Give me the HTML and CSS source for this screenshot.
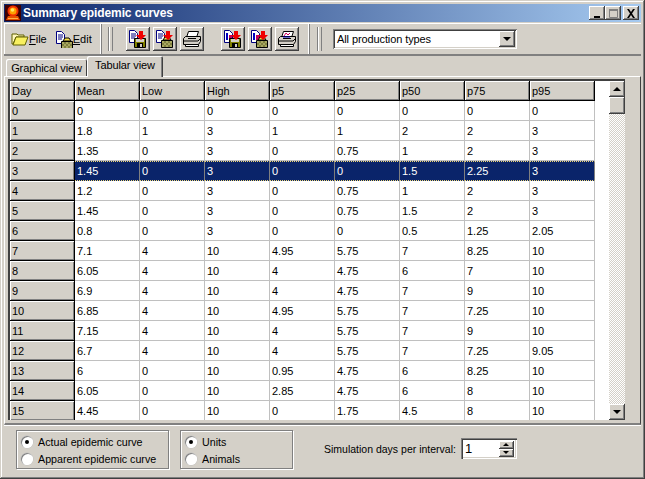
FILE: index.html
```html
<!DOCTYPE html>
<html>
<head>
    <title>Summary epidemic curves</title>
    <link rel="stylesheet" href="styles.css">
</head>
<body>
<svg class="defs" width="0" height="0">
    <defs>
        <g id="doc">
            <path d="M1.500 1.500h5l3 3v9h-8z" fill="#fff" stroke="#000080"/>
            <path d="M3 5h5M3 7h5M3 9h4" stroke="#000080"/>
        </g>
        <g id="doc-color">
            <path d="M1.500 1.500h5l3 3v9h-8z" fill="#fff" stroke="#000080"/>
            <path d="M3 4h2v7H3z" fill="#0000c0"/>
            <path d="M6 6h3v5H6z" fill="#c00060"/>
        </g>
        <g id="arrow">
            <path d="M11 2h4v4h3l-5 5-5-5h3z" fill="#f00000"/>
        </g>
        <g id="floppy">
            <path d="M6.500 9.500h11v9h-11z" fill="#808000" stroke="#000"/>
            <path d="M8 10h8v3H8z" fill="#d4d0c8"/>
            <path d="M9 14h6v5H9z" fill="#000"/>
            <path d="M12 15h2v3h-2z" fill="#d4d0c8"/>
        </g>
        <g id="bag">
            <path d="M6.500 11.500h11v7h-11z" fill="#808040" stroke="#000"/>
            <path d="M7 12h2v2H7zm4 0h2v2h-2zm4 0h2v2h-2zM9 14h2v2H9zm4 0h2v2h-2zm-6 2h2v2H7zm4 0h2v2h-2zm4 0h2v2h-2z" fill="#a8a860"/>
            <path d="M8 11l2-3h4l2 3z" fill="#f8e048" stroke="#000"/>
        </g>
        <g id="printer">
            <path d="M6.500 2.500h10l-2 6h-10z" fill="#fff" stroke="#000"/>
            <path d="M1.500 9.500l2-2h15v5l-2 3h-15z" fill="#d4d0c8" stroke="#000"/>
            <path d="M2 12h14l2-2" fill="none" stroke="#000"/>
            <path d="M3.500 15.500h13v2h-13z" fill="#fff" stroke="#000"/>
            <path d="M6 9.500h8" stroke="#000"/>
        </g>
        <g id="printer-color">
            <use href="#printer"/>
            <path d="M7 7l2-3 2 2 2-2" fill="none" stroke="#d00060"/>
            <path d="M6 8h7" stroke="#0000c0"/>
        </g>
    </defs>
</svg>

<div class="window">
    <div class="titlebar">
        <svg class="app-icon" width="16" height="16" viewBox="0 0 16 16">
            <rect width="16" height="16" fill="#400000"/>
            <circle cx="8" cy="6" r="5.500" fill="#f03000"/>
            <circle cx="8" cy="6" r="3.500" fill="#ffa000"/>
            <circle cx="7.500" cy="5" r="1.800" fill="#ffe860"/>
            <path d="M1 15l2-4h10l2 4z" fill="#e85000"/>
            <path d="M3 13h10v1H3z" fill="#ffb040"/>
        </svg>
        <span class="title-text">Summary epidemic curves</span>
        <div class="caption-btns">
            <button class="caption-btn"><svg width="9" height="9" viewBox="0 0 9 9"><path d="M1 7h6v2H1z"/></svg></button>
            <button class="caption-btn"><svg width="11" height="10" viewBox="0 0 11 10"><path d="M1.500 1.500h8v8h-8z" fill="none" stroke="#808080"/><path d="M1 1h9v2H1z" fill="#808080"/></svg></button>
            <button class="caption-btn caption-close"><svg width="10" height="9" viewBox="0 0 10 9"><path d="M1 0h2l2 3 2-3h2L6 4.500 9 9H7L5 6 3 9H1l3-4.500z"/></svg></button>
        </div>
    </div>

    <div class="toolbar">
        <div class="band band-menu">
            <span class="menu-item">
                <svg width="18" height="16" viewBox="0 0 18 16"><path d="M1 3h5l1 1h6v2H5L2 13H1z" fill="#fff8c0" stroke="#606000"/><path d="M5 6h12l-3 8H2z" fill="#f8f060" stroke="#606000"/></svg>
                <span><u>F</u>ile</span>
            </span>
            <span class="menu-item menu-edit">
                <svg width="18" height="18" viewBox="0 0 18 18"><use href="#doc"/><use href="#bag"/></svg>
                <span><u>E</u>dit</span>
            </span>
        </div>
        <div class="band band-tools">
            <i class="grip"></i>
            <div class="tool-group">
                <button class="tool"><svg width="20" height="20" viewBox="0 0 20 20"><use href="#doc"/><use href="#floppy"/><use href="#arrow"/></svg></button>
                <button class="tool"><svg width="20" height="20" viewBox="0 0 20 20"><use href="#doc"/><use href="#bag"/><use href="#arrow"/></svg></button>
                <button class="tool"><svg width="20" height="20" viewBox="0 0 20 20"><use href="#printer"/></svg></button>
            </div>
            <div class="tool-group tool-group-b">
                <button class="tool"><svg width="20" height="20" viewBox="0 0 20 20"><use href="#doc-color"/><use href="#floppy"/><use href="#arrow"/></svg></button>
                <button class="tool"><svg width="20" height="20" viewBox="0 0 20 20"><use href="#doc-color"/><use href="#bag"/><use href="#arrow"/></svg></button>
                <button class="tool"><svg width="20" height="20" viewBox="0 0 20 20"><use href="#printer-color"/></svg></button>
            </div>
        </div>
        <div class="band band-combo">
            <i class="grip"></i>
            <div class="combo">
                <span class="combo-text">All production types</span>
                <button class="scroll-btn combo-btn"><i class="arrow-down"></i></button>
            </div>
        </div>
    </div>

    <div class="tabs">
        <span class="tab">Graphical view</span>
        <span class="tab tab-active">Tabular view</span>
    </div>

    <div class="tab-panel">
        <div class="grid-frame">
            <table class="grid">
                <thead>
                    <tr><th>Day</th><th>Mean</th><th>Low</th><th>High</th><th>p5</th><th>p25</th><th>p50</th><th>p75</th><th>p95</th></tr>
                </thead>
                <tbody>
                    <tr><th>0</th><td>0</td><td>0</td><td>0</td><td>0</td><td>0</td><td>0</td><td>0</td><td>0</td></tr>
                    <tr><th>1</th><td>1.8</td><td>1</td><td>3</td><td>1</td><td>1</td><td>2</td><td>2</td><td>3</td></tr>
                    <tr><th>2</th><td>1.35</td><td>0</td><td>3</td><td>0</td><td>0.75</td><td>1</td><td>2</td><td>3</td></tr>
                    <tr class="selected"><th>3</th><td>1.45</td><td>0</td><td>3</td><td>0</td><td>0</td><td>1.5</td><td>2.25</td><td>3</td></tr>
                    <tr><th>4</th><td>1.2</td><td>0</td><td>3</td><td>0</td><td>0.75</td><td>1</td><td>2</td><td>3</td></tr>
                    <tr><th>5</th><td>1.45</td><td>0</td><td>3</td><td>0</td><td>0.75</td><td>1.5</td><td>2</td><td>3</td></tr>
                    <tr><th>6</th><td>0.8</td><td>0</td><td>3</td><td>0</td><td>0</td><td>0.5</td><td>1.25</td><td>2.05</td></tr>
                    <tr><th>7</th><td>7.1</td><td>4</td><td>10</td><td>4.95</td><td>5.75</td><td>7</td><td>8.25</td><td>10</td></tr>
                    <tr><th>8</th><td>6.05</td><td>4</td><td>10</td><td>4</td><td>4.75</td><td>6</td><td>7</td><td>10</td></tr>
                    <tr><th>9</th><td>6.9</td><td>4</td><td>10</td><td>4</td><td>4.75</td><td>7</td><td>9</td><td>10</td></tr>
                    <tr><th>10</th><td>6.85</td><td>4</td><td>10</td><td>4.95</td><td>5.75</td><td>7</td><td>7.25</td><td>10</td></tr>
                    <tr><th>11</th><td>7.15</td><td>4</td><td>10</td><td>4</td><td>5.75</td><td>7</td><td>9</td><td>10</td></tr>
                    <tr><th>12</th><td>6.7</td><td>4</td><td>10</td><td>4</td><td>5.75</td><td>7</td><td>7.25</td><td>9.05</td></tr>
                    <tr><th>13</th><td>6</td><td>0</td><td>10</td><td>0.95</td><td>4.75</td><td>6</td><td>8.25</td><td>10</td></tr>
                    <tr><th>14</th><td>6.05</td><td>0</td><td>10</td><td>2.85</td><td>4.75</td><td>6</td><td>8</td><td>10</td></tr>
                    <tr><th>15</th><td>4.45</td><td>0</td><td>10</td><td>0</td><td>1.75</td><td>4.5</td><td>8</td><td>10</td></tr>
                </tbody>
            </table>
            <div class="scrollbar">
                <button class="scroll-btn"><i class="arrow-up"></i></button>
                <button class="scroll-btn scroll-thumb"></button>
                <div class="scroll-track"></div>
                <button class="scroll-btn"><i class="arrow-down"></i></button>
            </div>
        </div>
    </div>

    <div class="options">
        <div class="radio-group radio-curve">
            <label class="radio"><i class="radio-dot on"></i>Actual epidemic curve</label>
            <label class="radio"><i class="radio-dot"></i>Apparent epidemic curve</label>
        </div>
        <div class="radio-group radio-units">
            <label class="radio"><i class="radio-dot on"></i>Units</label>
            <label class="radio"><i class="radio-dot"></i>Animals</label>
        </div>
        <div class="interval">
            <span>Simulation days per interval:</span>
            <div class="spin">
                <span class="spin-value">1</span>
                <div class="spin-btns">
                    <button class="scroll-btn"><i class="arrow-up small"></i></button>
                    <button class="scroll-btn"><i class="arrow-down small"></i></button>
                </div>
            </div>
        </div>
    </div>
</div>
</body>
</html>
```

FILE: styles.css
```css
* {
    box-sizing: border-box;
}

html, body {
    margin: 0;
    padding: 0;
}

body {
    width: 645px;
    height: 479px;
    overflow: hidden;
    font-family: "Liberation Sans", Arial, sans-serif;
    font-size: 11px;
    color: #000;
    background-color: #d4d0c8;
}

button {
    padding: 0;
    margin: 0;
    border: none;
    font: inherit;
}

.defs {
    position: absolute;
}

.window {
    width: 645px;
    height: 479px;
    padding: 4px;
    display: flex;
    flex-direction: column;
    background-color: #d4d0c8;
    box-shadow: inset -1px -1px 0 #404040, inset 1px 1px 0 #d4d0c8, inset -2px -2px 0 #808080, inset 2px 2px 0 #fff;
}

/* title bar */
.titlebar {
    height: 18px;
    flex: none;
    display: flex;
    align-items: center;
    padding: 0 2px 0 1px;
    background: linear-gradient(to right, #0a246a, #a6caf0);
}

.app-icon {
    flex: none;
    margin-right: 2px;
}

.title-text {
    color: #fff;
    font-size: 12px;
    font-weight: bold;
    letter-spacing: -0.1px;
}

.caption-btns {
    margin-left: auto;
    display: flex;
}

.caption-btn {
    width: 16px;
    height: 14px;
    display: flex;
    align-items: center;
    justify-content: center;
    background-color: #d4d0c8;
    box-shadow: inset -1px -1px 0 #404040, inset 1px 1px 0 #fff, inset -2px -2px 0 #808080;
}

.caption-close {
    margin-left: 2px;
}

/* tool bar */
.toolbar {
    height: 33px;
    flex: none;
    margin-top: 1px;
    display: flex;
    border-top: 1px solid #fff;
    border-bottom: 2px solid #808080;
}

.band {
    height: 100%;
    display: flex;
    align-items: center;
}

.band-menu {
    width: 97px;
    padding-left: 6px;
    gap: 8px;
    border-left: 1px solid #fff;
    border-right: 1px solid #fff;
    box-shadow: 1px 0 0 #808080;
}

.band-tools {
    width: 208px;
    padding-left: 7px;
    border-right: 1px solid #fff;
    box-shadow: 1px 0 0 #808080;
}

.band-combo {
    flex: 1;
    padding-left: 8px;
}

.grip {
    width: 5px;
    height: 24px;
    flex: none;
    border-left: 1px solid #808080;
    border-right: 1px solid #808080;
    box-shadow: inset 1px 0 0 #fff;
    background-color: #d4d0c8;
}

.menu-item {
    display: flex;
    align-items: center;
}

.tool-group {
    display: flex;
    gap: 3px;
    margin-left: 13px;
}

.tool-group-b {
    margin-left: 17px;
}

.tool {
    width: 24px;
    height: 24px;
    display: flex;
    align-items: center;
    justify-content: center;
    background-color: #d4d0c8;
    box-shadow: inset -1px -1px 0 #404040, inset 1px 1px 0 #fff, inset -2px -2px 0 #808080;
}

.combo {
    width: 184px;
    height: 20px;
    margin-left: 11px;
    display: flex;
    align-items: center;
    justify-content: space-between;
    padding: 2px;
    background-color: #fff;
    box-shadow: inset 1px 1px 0 #808080, inset -1px -1px 0 #fff, inset 2px 2px 0 #404040, inset -2px -2px 0 #d4d0c8;
}

.combo-text {
    padding-left: 2px;
    letter-spacing: -0.1px;
}

.combo-btn {
    width: 16px;
    height: 16px;
}

/* tabs */
.tabs {
    height: 20px;
    flex: none;
    display: flex;
    align-items: flex-end;
    padding-left: 2px;
}

.tab {
    height: 17px;
    width: 81px;
    display: flex;
    align-items: center;
    justify-content: center;
    letter-spacing: -0.1px;
    border-radius: 2px 2px 0 0;
    box-shadow: inset 1px 1px 0 #fff, inset -1px 0 0 #404040;
}

.tab-active {
    height: 21px;
    width: 76px;
    box-shadow: inset 1px 1px 0 #fff, inset -1px 0 0 #404040, inset -2px 0 0 #808080;
    position: relative;
    top: 1px;
    padding-bottom: 3px;
    background-color: #d4d0c8;
}

/* table panel */
.tab-panel {
    height: 349px;
    flex: none;
    padding: 2px 15px 3px 3px;
    border-top: 1px solid #fff;
    border-left: 1px solid #fff;
    border-right: 1px solid #404040;
    border-bottom: 2px solid #808080;
}

.grid-frame {
    height: 100%;
    display: flex;
    justify-content: space-between;
    overflow: hidden;
    background-color: #fff;
    padding: 2px 0 0 2px;
    box-shadow: inset 2px 2px 0 #404040, inset 1px 1px 0 #808080;
}

.grid {
    flex: none;
    border-collapse: separate;
    border-spacing: 0;
    table-layout: fixed;
    width: 585px;
    height: 340px;
}

.grid th, .grid td {
    width: 65px;
    height: 20px;
    padding: 0 0 0 2px;
    overflow: hidden;
    text-align: left;
    font-weight: normal;
    white-space: nowrap;
}

.grid td {
    border-right: 1px solid #c0c0c0;
    border-bottom: 1px solid #c0c0c0;
}

.grid th {
    background-color: #d4d0c8;
    border-right: 1px solid #000;
    border-bottom: 1px solid #000;
    box-shadow: inset 1px 1px 0 #fff, inset -1px -1px 0 #808080;
}

.selected td {
    color: #fff;
    background-color: #0a246a;
    border-right-color: #808080;
    border-top: 1px dotted #f0d878;
    border-bottom: 1px dotted #f0d878;
}

/* scroll bar */
.scrollbar {
    width: 16px;
    display: flex;
    flex-direction: column;
    flex: none;
    background-color: #d4d0c8;
}

.scroll-btn {
    width: 16px;
    height: 16px;
    flex: none;
    display: flex;
    align-items: center;
    justify-content: center;
    background-color: #d4d0c8;
    box-shadow: inset -1px -1px 0 #404040, inset 1px 1px 0 #fff, inset -2px -2px 0 #808080;
}

.scroll-thumb {
    height: 17px;
}

.scroll-track {
    flex: 1;
    background-image: conic-gradient(#fff 25%, #d4d0c8 0 50%, #fff 0 75%, #d4d0c8 0);
    background-size: 2px 2px;
}

.arrow-up, .arrow-down {
    width: 0;
    height: 0;
    border-left: 4px solid transparent;
    border-right: 4px solid transparent;
}

.arrow-up {
    border-bottom: 4px solid #000;
}

.arrow-down {
    border-top: 4px solid #000;
}

.small {
    border-left-width: 3px;
    border-right-width: 3px;
    border-top-width: 3px;
    border-bottom-width: 3px;
}

.arrow-up.small {
    border-top-width: 0;
}

.arrow-down.small {
    border-bottom-width: 0;
}

/* bottom options */
.options {
    flex: 1;
    display: flex;
    align-items: flex-start;
    padding: 4px 0 0 12px;
    border-top: 1px solid #fff;
    font-size: 10.500px;
}

.radio-group {
    height: 39px;
    padding: 2px 0 0 4px;
    display: flex;
    flex-direction: column;
    font-size: 10.700px;
    border: 1px solid #808080;
    box-shadow: 1px 1px 0 #fff, inset 1px 1px 0 #fff;
}

.radio-curve {
    width: 153px;
}

.radio-units {
    width: 113px;
    margin-left: 11px;
}

.radio {
    height: 17px;
    display: flex;
    align-items: center;
    gap: 5px;
}

.radio-dot {
    width: 12px;
    height: 12px;
    flex: none;
    display: flex;
    align-items: center;
    justify-content: center;
    border-radius: 50%;
    background-color: #fff;
    box-shadow: inset 1px 1px 0 #808080, inset -1px -1px 0 #fff, 0 0 0 0.500px #c0c0c0;
}

.radio-dot.on::after {
    content: "";
    width: 4px;
    height: 4px;
    border-radius: 50%;
    background-color: #000;
}

.interval {
    display: flex;
    align-items: center;
    margin: 8px 0 0 31px;
    gap: 5px;
}

.spin {
    width: 56px;
    height: 21px;
    display: flex;
    align-items: center;
    justify-content: space-between;
    padding: 2px 3px 2px 2px;
    background-color: #fff;
    font-size: 13px;
    box-shadow: inset 1px 1px 0 #808080, inset 2px 2px 0 #404040, inset -1px -1px 0 #fff, inset -2px -2px 0 #d4d0c8;
}

.spin-value {
    padding-left: 2px;
}

.spin-btns {
    display: flex;
    flex-direction: column;
}

.spin-btns .scroll-btn {
    width: 15px;
    height: 8px;
}
```
